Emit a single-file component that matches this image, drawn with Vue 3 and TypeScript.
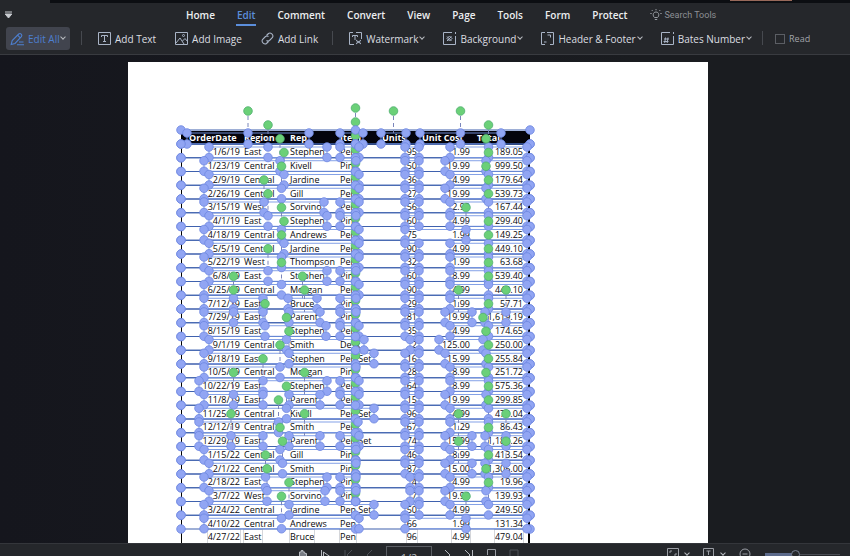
<script setup lang="ts">
import { ref } from 'vue'

type Span = [number, number]
type Row = [string, string, string, string, string, string, string]
interface Box { l: number; r: number; top: number; bottom: number; rotate: boolean; full: boolean }

const menus = ['Home', 'Edit', 'Comment', 'Convert', 'View', 'Page', 'Tools', 'Form', 'Protect']
const active = ref('Edit')
const headers = ['OrderDate', 'Region', 'Rep', 'Item', 'Units', 'Unit Cost', 'Total']

const rows: Row[] = [
  ['1/6/19', 'East', 'Stephen', 'Pen', '95', '1.99', '189.05'],
  ['1/23/19', 'Central', 'Kivell', 'Pins', '50', '19.99', '999.50'],
  ['2/9/19', 'Central', 'Jardine', 'Pen', '36', '4.99', '179.64'],
  ['2/26/19', 'Central', 'Gill', 'Pen', '27', '19.99', '539.73'],
  ['3/15/19', 'West', 'Sorvino', 'Pen', '56', '2.99', '167.44'],
  ['4/1/19', 'East', 'Stephen', 'Pins', '60', '4.99', '299.40'],
  ['4/18/19', 'Central', 'Andrews', 'Pen', '75', '1.99', '149.25'],
  ['5/5/19', 'Central', 'Jardine', 'Pen', '90', '4.99', '449.10'],
  ['5/22/19', 'West', 'Thompson', 'Pen', '32', '1.99', '63.68'],
  ['6/8/19', 'East', 'Stephen', 'Pins', '60', '8.99', '539.40'],
  ['6/25/19', 'Central', 'Morgan', 'Pen', '90', '4.99', '449.10'],
  ['7/12/19', 'East', 'Bruce', 'Pins', '29', '1.99', '57.71'],
  ['7/29/19', 'East', 'Parent', 'Pins', '81', '19.99', '1,619.19'],
  ['8/15/19', 'East', 'Stephen', 'Pen', '35', '4.99', '174.65'],
  ['9/1/19', 'Central', 'Smith', 'Desk', '2', '125.00', '250.00'],
  ['9/18/19', 'East', 'Stephen', 'Pen Set', '16', '15.99', '255.84'],
  ['10/5/19', 'Central', 'Morgan', 'Pins', '28', '8.99', '251.72'],
  ['10/22/19', 'East', 'Stephen', 'Pen', '64', '8.99', '575.36'],
  ['11/8/19', 'East', 'Parent', 'Pen', '15', '19.99', '299.85'],
  ['11/25/19', 'Central', 'Kivell', 'Pen Set', '96', '4.99', '479.04'],
  ['12/12/19', 'Central', 'Smith', 'Pen', '67', '1.29', '86.43'],
  ['12/29/19', 'East', 'Parent', 'Pen Set', '74', '15.99', '1,183.26'],
  ['1/15/22', 'Central', 'Gill', 'Pins', '46', '8.99', '413.54'],
  ['2/1/22', 'Central', 'Smith', 'Pins', '87', '15.00', '1,305.00'],
  ['2/18/22', 'East', 'Stephen', 'Pins', '4', '4.99', '19.96'],
  ['3/7/22', 'West', 'Sorvino', 'Pins', '7', '19.99', '139.93'],
  ['3/24/22', 'Central', 'Jardine', 'Pen Set', '50', '4.99', '249.50'],
  ['4/10/22', 'Central', 'Andrews', 'Pen', '66', '1.99', '131.34'],
  ['4/27/22', 'East', 'Bruce', 'Pen', '96', '4.99', '479.04'],
]

// Text runs on the left half of each row, as [left, right] in canvas units.
const leftRuns: Span[][] = [
  [[209, 327]], [[204, 356]], [[209, 359]], [[204, 359]], [[204, 324]], [[209, 327]], [[204, 359]],
  [[209, 359]], [[204, 359]], [[209, 327]], [[204, 359]], [[204, 263], [288, 317]], [[204, 263], [289, 320]],
  [[204, 326]], [[209, 364]], [[204, 374]], [[204, 356]], [[199, 327]], [[204, 263], [289, 320]],
  [[199, 374]], [[199, 358]], [[199, 263], [289, 320]], [[204, 356]], [[209, 356]], [[204, 327]],
  [[209, 325]], [[204, 374]], [[204, 359]],
]

// Rows whose units, cost and total form one run, and rows whose cost and total are separate.
const mergedRows = [6, 27]
const splitRows = [12, 21, 23]

const pitch = 13.75
const boxes: Box[] = []
const add = (l: number, r: number, top: number, bottom: number, rotate = true, full = false) =>
  boxes.push({ l, r, top, bottom, rotate, full })

add(181, 530, 130, 144, true, true)
for (const [l, r] of [[187, 309], [381, 406], [420, 501]] as Span[]) add(l, r, 133, 144)
add(340, 363, 133, 144, false)

leftRuns.forEach((runs, i) => {
  const base = 144 + i * pitch
  const top = base + 3
  const bottom = base + 13.5
  add(181, 530, base, base + pitch, true, true)
  runs.forEach(([l, r]) => add(l, r, top, bottom))
  if (runs[runs.length - 1][1] < 340) add(340, rows[i][3] === 'Pins' ? 356 : 359, top, bottom, false)
  if (mergedRows.includes(i)) {
    add(405, 527, top, bottom)
    return
  }
  add(rows[i][4].length === 1 ? 410 : 405, 419, top, bottom, false)
  const costLength = rows[i][5].length
  const costLeft = costLength === 6 ? 439 : costLength === 5 ? 445 : 450
  if (splitRows.includes(i)) {
    add(costLeft, 472, top, bottom)
    add(485, 527, top, bottom)
  } else {
    add(costLeft, 527, top, bottom)
  }
})

const mid = (b: Box) => (b.l + b.r) / 2
const xs = (b: Box) => (b.r - b.l > 35 ? [b.l, mid(b), b.r] : [b.l, b.r])
const fullBoxes = boxes.filter((b) => b.full)
const runBoxes = boxes.filter((b) => !b.full)
const rotatable = runBoxes.filter((b) => b.rotate)
const zoomLevel = ref(40)
const readMode = ref(false)
</script>

<template>
  <div class="app">
    <div class="titlebar"><span class="tab"></span><span class="accent"></span></div>
    <header class="ribbon">
      <div class="menu-row">
        <button class="collapse" aria-label="Collapse ribbon">
          <svg width="9" height="8" viewBox="0 0 9 8"><path d="M1 1h7M1.200 3h6.600L4.500 7z" fill="#c9ccd1" stroke="#c9ccd1" /></svg>
        </button>
        <nav class="menus">
          <button v-for="m in menus" :key="m" class="menu" :class="{ on: m === active }" @click="active = m">{{ m }}</button>
        </nav>
        <label class="search">
          <svg width="12" height="12" viewBox="0 0 12 12" fill="none" stroke="#979ba1"><path d="M4.500 8.500C2.500 7 2.700 3 6 3s3.500 4 1.500 5.500zM4.800 10.500h2.400M6 0v1.300M.3 4.500h1.400M10.300 4.500h1.400M1.700 1l1 1M10.300 1l-1 1" /></svg>
          <input type="text" placeholder="Search Tools" aria-label="Search Tools" />
        </label>
      </div>
      <div class="tools">
        <button class="tool edit">
          <svg width="15" height="14" viewBox="0 0 15 14" fill="none" stroke="#4d7fd0" stroke-width="1.100"><path d="M1.200 12.500l1-4L8.700 2q1.300-1 2.500.2t.2 2.500L5 11.500zM7.500 3.200l2.800 2.700M9 10h4.500M7 12.800h7" /></svg>
          Edit All<i class="chev"></i>
        </button>
        <span class="sep"></span>
        <button class="tool">
          <svg width="13" height="13" viewBox="0 0 13 13" fill="none" stroke="#a9b4c6"><path d="M.5.5h12v12H.5zM3.500 5V3.500h6V5M6.500 3.500v6M5 9.500h3" /></svg>
          Add Text
        </button>
        <button class="tool">
          <svg width="13" height="13" viewBox="0 0 13 13" fill="none" stroke="#a9b4c6"><path d="M.5.5h12v12H.5zM1 11l4-5 4 6M7.500 9L10 6.500l2.500 3" /><circle cx="8.500" cy="3.500" r="1" /></svg>
          Add Image
        </button>
        <button class="tool link">
          <svg width="13" height="13" viewBox="0 0 13 13" fill="none" stroke="#a9b4c6" stroke-width="1.100"><path d="M5.500 3.500L7.500 1.500q1.500-1.200 3.300.4t.7 3.600L8.500 8.500Q7 9.500 5.500 8.500M7.500 9.500l-2 2q-1.500 1.200-3.300-.4T1.500 7.500l3-3Q6 3.500 7.500 4.500" /></svg>
          Add Link
        </button>
        <span class="sep"></span>
        <button class="tool">
          <svg width="13" height="13" viewBox="0 0 13 13" fill="none" stroke="#a9b4c6"><path d="M4 .5H.5v12H5M7 .5h5.500V7M3.500 5V3.500h5V5M6 3.500V8M7 8l5 4M12 8l-5 4M7.500 10h4" /></svg>
          Watermark<i class="chev"></i>
        </button>
        <button class="tool">
          <svg width="13" height="13" viewBox="0 0 13 13" fill="none" stroke="#a9b4c6"><path d="M9 .5H.5v12h12V4M12.500 0v2M4 4.500l4.500 4.500M8.500 4.500L4 9M6.500 4l2.500 2.500-2.500 2.500L4 6.500z" /></svg>
          Background<i class="chev"></i>
        </button>
        <button class="tool">
          <svg width="13" height="13" viewBox="0 0 13 13" fill="none" stroke="#a9b4c6"><path d="M4 .5H.5v12H4M6 .5h6.500v12H9M6.500 3h3v2.500M3 10h2.500" /></svg>
          Header &amp; Footer<i class="chev"></i>
        </button>
        <button class="tool bates">
          <svg width="13" height="13" viewBox="0 0 13 13" fill="none" stroke="#a9b4c6"><path d="M9 .5H.5v12h12V4M12.500 0v2M3 7h5M2.500 9.500h5M4.500 5.500l-.8 5.500M7 5.500l-.8 5.500" /></svg>
          Bates Number<i class="chev"></i>
        </button>
        <span class="sep"></span>
        <label class="read"><input v-model="readMode" type="checkbox" />Read</label>
      </div>
    </header>

    <main class="workspace">
      <section class="paper">
        <div class="sheet">
          <table>
            <colgroup>
              <col class="c-date" /><col class="c-region" /><col class="c-rep" /><col class="c-item" />
              <col class="c-units" /><col class="c-cost" /><col class="c-total" />
            </colgroup>
            <thead>
              <tr><th v-for="h in headers" :key="h">{{ h }}</th></tr>
            </thead>
            <tbody>
              <tr v-for="(row, i) in rows" :key="i">
                <td v-for="(cell, j) in row" :key="j"><span>{{ cell }}</span></td>
              </tr>
            </tbody>
          </table>
          <svg class="handles" viewBox="181 131 349 413" aria-hidden="true">
            <g class="rules">
              <path v-for="(b, i) in fullBoxes" :key="i" :d="`M181 ${b.top}H530M181 ${b.bottom}H530`" />
            </g>
            <g class="frames">
              <rect v-for="(b, i) in runBoxes" :key="i" :x="b.l" :y="b.top" :width="b.r - b.l" :height="b.bottom - b.top" />
            </g>
            <g class="stems">
              <path v-for="(b, i) in rotatable" :key="i" :d="`M${mid(b)} ${b.top - 17}V${b.top}`" />
              <path d="M355.500 113V130" />
            </g>
            <g class="turn">
              <circle v-for="(b, i) in fullBoxes" :key="i" :cx="mid(b)" :cy="b.top - 22" r="4.300" />
            </g>
            <g class="grip">
              <template v-for="(b, i) in boxes" :key="i">
                <template v-for="x in xs(b)" :key="x">
                  <circle :cx="x" :cy="b.top" r="4.300" />
                  <circle :cx="x" :cy="b.bottom" r="4.300" />
                </template>
              </template>
            </g>
            <g class="turn">
              <circle v-for="(b, i) in rotatable" :key="i" :cx="mid(b)" :cy="b.top - 22" r="4.300" />
            </g>
          </svg>
        </div>
      </section>
    </main>

    <footer class="status">
      <div class="pager">
        <button aria-label="Hand"><svg width="12" height="14" viewBox="0 0 12 14" fill="#777b83" stroke="#b7bac0"><path d="M3 12L.8 8l1-.8L3.500 9V3h1.700V1.500H7V3h1.700v1.500h1.800V10L9 13z" /></svg></button>
        <button aria-label="Select"><svg width="12" height="14" viewBox="0 0 12 14" fill="none" stroke="#b7bac0"><path d="M1.500 1v12M3.500 3l7 5-4 .5-3 3z" /></svg></button>
        <button aria-label="First page"><svg width="10" height="12" viewBox="0 0 10 12" fill="none" stroke="#4d5057"><path d="M1 1v10M8 1L3 6l5 5" /></svg></button>
        <button aria-label="Previous page"><svg width="8" height="12" viewBox="0 0 8 12" fill="none" stroke="#4d5057"><path d="M6 1L1 6l5 5" /></svg></button>
        <input class="page" type="text" value="1/2" aria-label="Page" />
        <button aria-label="Next page"><svg width="8" height="12" viewBox="0 0 8 12" fill="none" stroke="#b7bac0"><path d="M1 1l5 5-5 5" /></svg></button>
        <button aria-label="Last page"><svg width="10" height="12" viewBox="0 0 10 12" fill="none" stroke="#b7bac0"><path d="M1 1l5 5-5 5M8.500 1v10" /></svg></button>
        <button aria-label="Single page"><svg width="11" height="12" viewBox="0 0 11 12" fill="none" stroke="#9a9da4"><path d="M1.500 6V.5h8V9H5" /></svg></button>
        <button aria-label="Two pages"><svg width="10" height="12" viewBox="0 0 10 12" fill="none" stroke="#4d5057"><path d="M1 1h8v9H1z" /></svg></button>
      </div>
      <div class="view">
        <button aria-label="Fit"><svg width="12" height="12" viewBox="0 0 12 12" fill="none" stroke="#9a9da4"><path d="M.5.5h11v9H.5zM3 5V3h2M7 7h2V5" /></svg><i class="chev"></i></button>
        <button aria-label="Layout"><svg width="12" height="12" viewBox="0 0 12 12" fill="none" stroke="#9a9da4"><path d="M.5.5h10v9H.5zM3.500 3h4M5.500 3v4" /></svg><i class="chev"></i></button>
        <button aria-label="Zoom out"><svg width="12" height="12" viewBox="0 0 12 12" fill="none" stroke="#9a9da4"><circle cx="6" cy="6" r="5" /><path d="M3.500 6h5" /></svg></button>
        <input v-model="zoomLevel" class="zoom" type="range" min="0" max="100" aria-label="Zoom" />
      </div>
    </footer>
  </div>
</template>

<style>
body { background: #17181e; overflow: hidden; }
</style>

<style scoped>
* { box-sizing: border-box; }
.app { height: 100vh; display: flex; flex-direction: column; overflow: hidden; font-family: "Open Sans", "Noto Sans", sans-serif; font-size: 10px; color: #dcdee1; background: #17181e; }
button, input { font: inherit; color: inherit; background: none; border: 0; padding: 0; margin: 0; }
svg { flex: none; display: block; }
.titlebar { flex: none; height: 3px; background: #0c0e12; display: flex; justify-content: space-between; }
.tab { width: 50px; background: #25272b; }
.accent { width: 62px; height: 1px; margin-right: 58px; background: #98695a; }
.ribbon { flex: none; height: 52px; background: #25272b; border-bottom: 1px solid #393b40; }
.menu-row { height: 24px; display: flex; align-items: center; }
.collapse { width: 9px; margin-left: 4px; margin-right: 172px; }
.menus { display: flex; gap: 20px; }
.menu { height: 22px; padding: 2px 1px 0; border-bottom: 2px solid transparent; font-weight: 600; line-height: 16px; white-space: nowrap; color: #eceef0; }
.menu.on { color: #5b8edb; border-color: #5b8edb; }
.search { display: flex; align-items: center; gap: 2px; margin-left: 22px; font-family: Roboto, sans-serif; font-size: 9px; color: #8d9095; }
.search input { width: 70px; height: 16px; }
.search input::placeholder { color: #8d9095; opacity: 1; }
.tools { height: 24px; display: flex; align-items: flex-start; padding-left: 6px; white-space: nowrap; }
.tool { height: 23px; display: flex; align-items: center; gap: 4px; margin-right: 19px; }
.edit { width: 64px; padding-left: 4px; margin-right: 11px; gap: 3px; background: #41444e; border-radius: 3px; color: #4d7fd0; }
.tool .chev { margin-left: -2px; }
.chev { flex: none; width: 4px; height: 4px; border: solid #b8bbc0; border-width: 0 1px 1px 0; rotate: 45deg; margin-bottom: 3px; }
.sep { width: 1px; height: 14px; margin: 4px 16px 0 0; background: #46494f; }
.link { margin-right: 14px; }
.bates { margin-right: 11px; }
.bates + .sep { margin-right: 12px; }
.read { height: 23px; display: flex; align-items: center; gap: 4px; font-size: 9px; color: #a1a4a9; }
.read input { appearance: none; width: 10px; height: 10px; border: 1px solid #5b5e64; }
.workspace { flex: 1; min-height: 0; overflow: hidden; display: flex; justify-content: center; padding: 7px 14px 0 0; background: linear-gradient(90deg, #15161d, #1a1c20 75%); }
.paper { width: 580px; padding: 69px 53px 0; background: #fff; overflow: hidden; }
.sheet { position: relative; width: 349px; }
.handles { position: absolute; inset: 0; width: 349px; height: 413px; overflow: visible; }
table { width: 100%; table-layout: fixed; border-collapse: separate; border-spacing: 0; font-size: 9px; font-weight: 500; line-height: 13px; color: #08090c; border-left: 1px solid #000; border-right: 2px solid #000; }
.c-date { width: 60px; }
.c-region { width: 46px; }
.c-rep { width: 50px; }
.c-item { width: 42px; }
.c-units { width: 40px; }
.c-cost { width: 52px; }
tr { height: 14px; }
tbody tr:nth-child(4n) { height: 13px; }
th, td { padding: 0 2px; text-align: left; vertical-align: top; white-space: nowrap; overflow: visible; }
th { background: #04040c; color: #fff; font-weight: 700; }
th:first-child { padding-left: 7px; }
th:last-child { padding-left: 5px; }
td:first-child, td:nth-child(n + 5) { text-align: right; }
td:nth-child(5) { padding-right: 3px; }
td:last-child { padding-right: 5px; }
tr:last-child td span { outline: 1px solid #d4d6da; }
.rules path { stroke: #3f61ae; stroke-width: 1.200; }
.frames rect { fill: none; stroke: #7898e4; stroke-width: 0.900; }
.stems path { stroke: #7b86bb; stroke-dasharray: 4 3; }
.grip circle { fill: #91a5f3; stroke: #6d87df; stroke-width: 0.800; }
.turn circle { fill: #6bd078; stroke: #4fae70; stroke-width: 0.800; }
.status { flex: none; height: 13px; overflow: hidden; display: flex; align-items: flex-start; background: #25272b; border-top: 1px solid #34363b; }
.pager { display: flex; align-items: flex-start; gap: 12px; padding: 5px 0 0 296px; }
.page { width: 46px; height: 22px; margin-top: -3px; border: 1px solid #5b5e64; text-align: center; font-size: 11px; color: #b7bac0; }
.view { margin-left: auto; display: flex; align-items: flex-start; gap: 14px; padding: 4px 10px 0 0; }
.view button { display: flex; align-items: center; gap: 6px; }
.zoom { appearance: none; width: 75px; height: 12px; background: linear-gradient(#5c6a8b, #5c6a8b) 0 5px / 30px 3px no-repeat, linear-gradient(#4a4d54, #4a4d54) 0 6px / 100% 1px no-repeat; }
.zoom::-webkit-slider-thumb { appearance: none; width: 9px; height: 9px; border-radius: 50%; background: #25272b; border: 1px solid #777f91; }
</style>
